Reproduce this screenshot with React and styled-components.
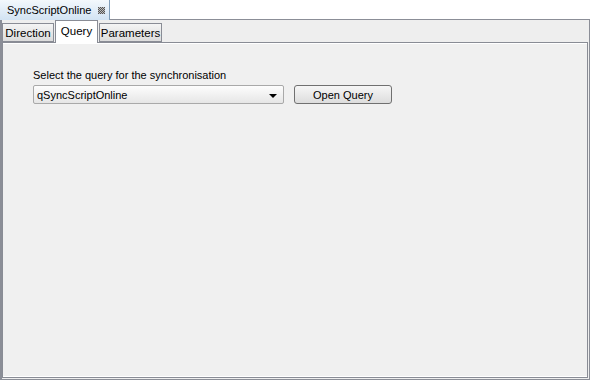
import styled, { createGlobalStyle } from 'styled-components';

const GlobalStyle = createGlobalStyle`
  html, body {
    margin: 0;
    padding: 0;
    background: #ffffff;
  }
  body {
    font-family: "Liberation Sans", Arial, sans-serif;
    font-size: 11px;
    color: #000000;
  }
`;

const Window = styled.div`
  width: 590px;
  height: 380px;
  display: flex;
  flex-direction: column;
  background: #ffffff;
`;

const EditorTabs = styled.div`
  height: 19px;
  display: flex;
  align-items: stretch;
`;

const EditorTab = styled.div`
  width: 110px;
  display: flex;
  align-items: center;
  justify-content: space-between;
  padding: 0 4px 0 7px;
  box-sizing: border-box;
  border-right: 1px solid #7f9db9;
  background: linear-gradient(#f3f8fc, #d2e3f3);
  margin-bottom: -1px;
  position: relative;
  z-index: 1;
  font-size: 11px;
`;

const CloseIcon = () => (
  <svg width="7" height="7" viewBox="0 0 7 7">
    {[0, 1, 2, 3, 4, 5, 6].map((r) =>
      [0, 1, 2, 3, 4, 5, 6].map((c) => (
        <rect
          key={`${r}-${c}`}
          x={c}
          y={r}
          width="1"
          height="1"
          fill={(r + c) % 2 === 0 ? '#555' : '#bbb'}
        />
      ))
    )}
  </svg>
);

const Outer = styled.div`
  flex: 1;
  display: flex;
  flex-direction: column;
  border: 1px solid #8b8e97;
  border-left-width: 2px;
  background: #eeeeee;
  padding: 0 1px 1px 0;
`;

const TabStrip = styled.div`
  height: 22px;
  display: flex;
  align-items: flex-end;
  position: relative;
  z-index: 1;
`;

const SubTab = styled.div`
  width: ${(p) => p.$w}px;
  height: ${(p) => (p.$active ? '23px' : '19px')};
  margin-right: 1px;
  margin-bottom: ${(p) => (p.$active ? '-1px' : '0')};
  display: flex;
  align-items: center;
  justify-content: center;
  box-sizing: border-box;
  border: 1px solid #898c95;
  border-bottom: ${(p) => (p.$active ? 'none' : '1px solid #898c95')};
  background: ${(p) => (p.$active ? '#ffffff' : 'linear-gradient(#f4f4f4, #dcdcdc)')};
  font-size: 11.5px;
  padding-bottom: ${(p) => (p.$active ? '3px' : '0')};
`;

const Inner = styled.div`
  flex: 1;
  border: 1px solid #898c95;
  box-shadow: inset 0 1px 0 #ffffff, inset 0 -1px 0 #ffffff;
  background: #f0f0f0;
  padding: 25px 0 0 30px;
  display: flex;
  flex-direction: column;
  gap: 3px;
`;

const Label = styled.div`
  height: 14px;
  line-height: 14px;
`;

const Row = styled.div`
  display: flex;
  align-items: center;
  gap: 10px;
`;

const Combo = styled.div`
  width: 251px;
  height: 19px;
  box-sizing: border-box;
  border: 1px solid #a9a9a9;
  border-radius: 2px;
  background: linear-gradient(#fdfdfd, #e6e6e6);
  display: flex;
  align-items: center;
  justify-content: space-between;
  padding: 0 6px 0 3px;
`;

const Arrow = styled.div`
  width: 0;
  height: 0;
  border-left: 4px solid transparent;
  border-right: 4px solid transparent;
  border-top: 4px solid #000;
  margin-top: 2px;
`;

const Button = styled.div`
  width: 98px;
  height: 19px;
  box-sizing: border-box;
  border: 1px solid #707070;
  border-radius: 3px;
  background: linear-gradient(#f6f6f6, #dddddd);
  display: flex;
  align-items: center;
  justify-content: center;
`;

export default function App() {
  return (
    <>
      <GlobalStyle />
      <Window>
        <EditorTabs>
          <EditorTab>
            <span>SyncScriptOnline</span>
            <CloseIcon />
          </EditorTab>
        </EditorTabs>
        <Outer>
          <TabStrip>
            <SubTab $w={52}>Direction</SubTab>
            <SubTab $w={43} $active>Query</SubTab>
            <SubTab $w={63}>Parameters</SubTab>
          </TabStrip>
          <Inner>
            <Label>Select the query for the synchronisation</Label>
            <Row>
              <Combo>
                <span>qSyncScriptOnline</span>
                <Arrow />
              </Combo>
              <Button>Open Query</Button>
            </Row>
          </Inner>
        </Outer>
      </Window>
    </>
  );
}
